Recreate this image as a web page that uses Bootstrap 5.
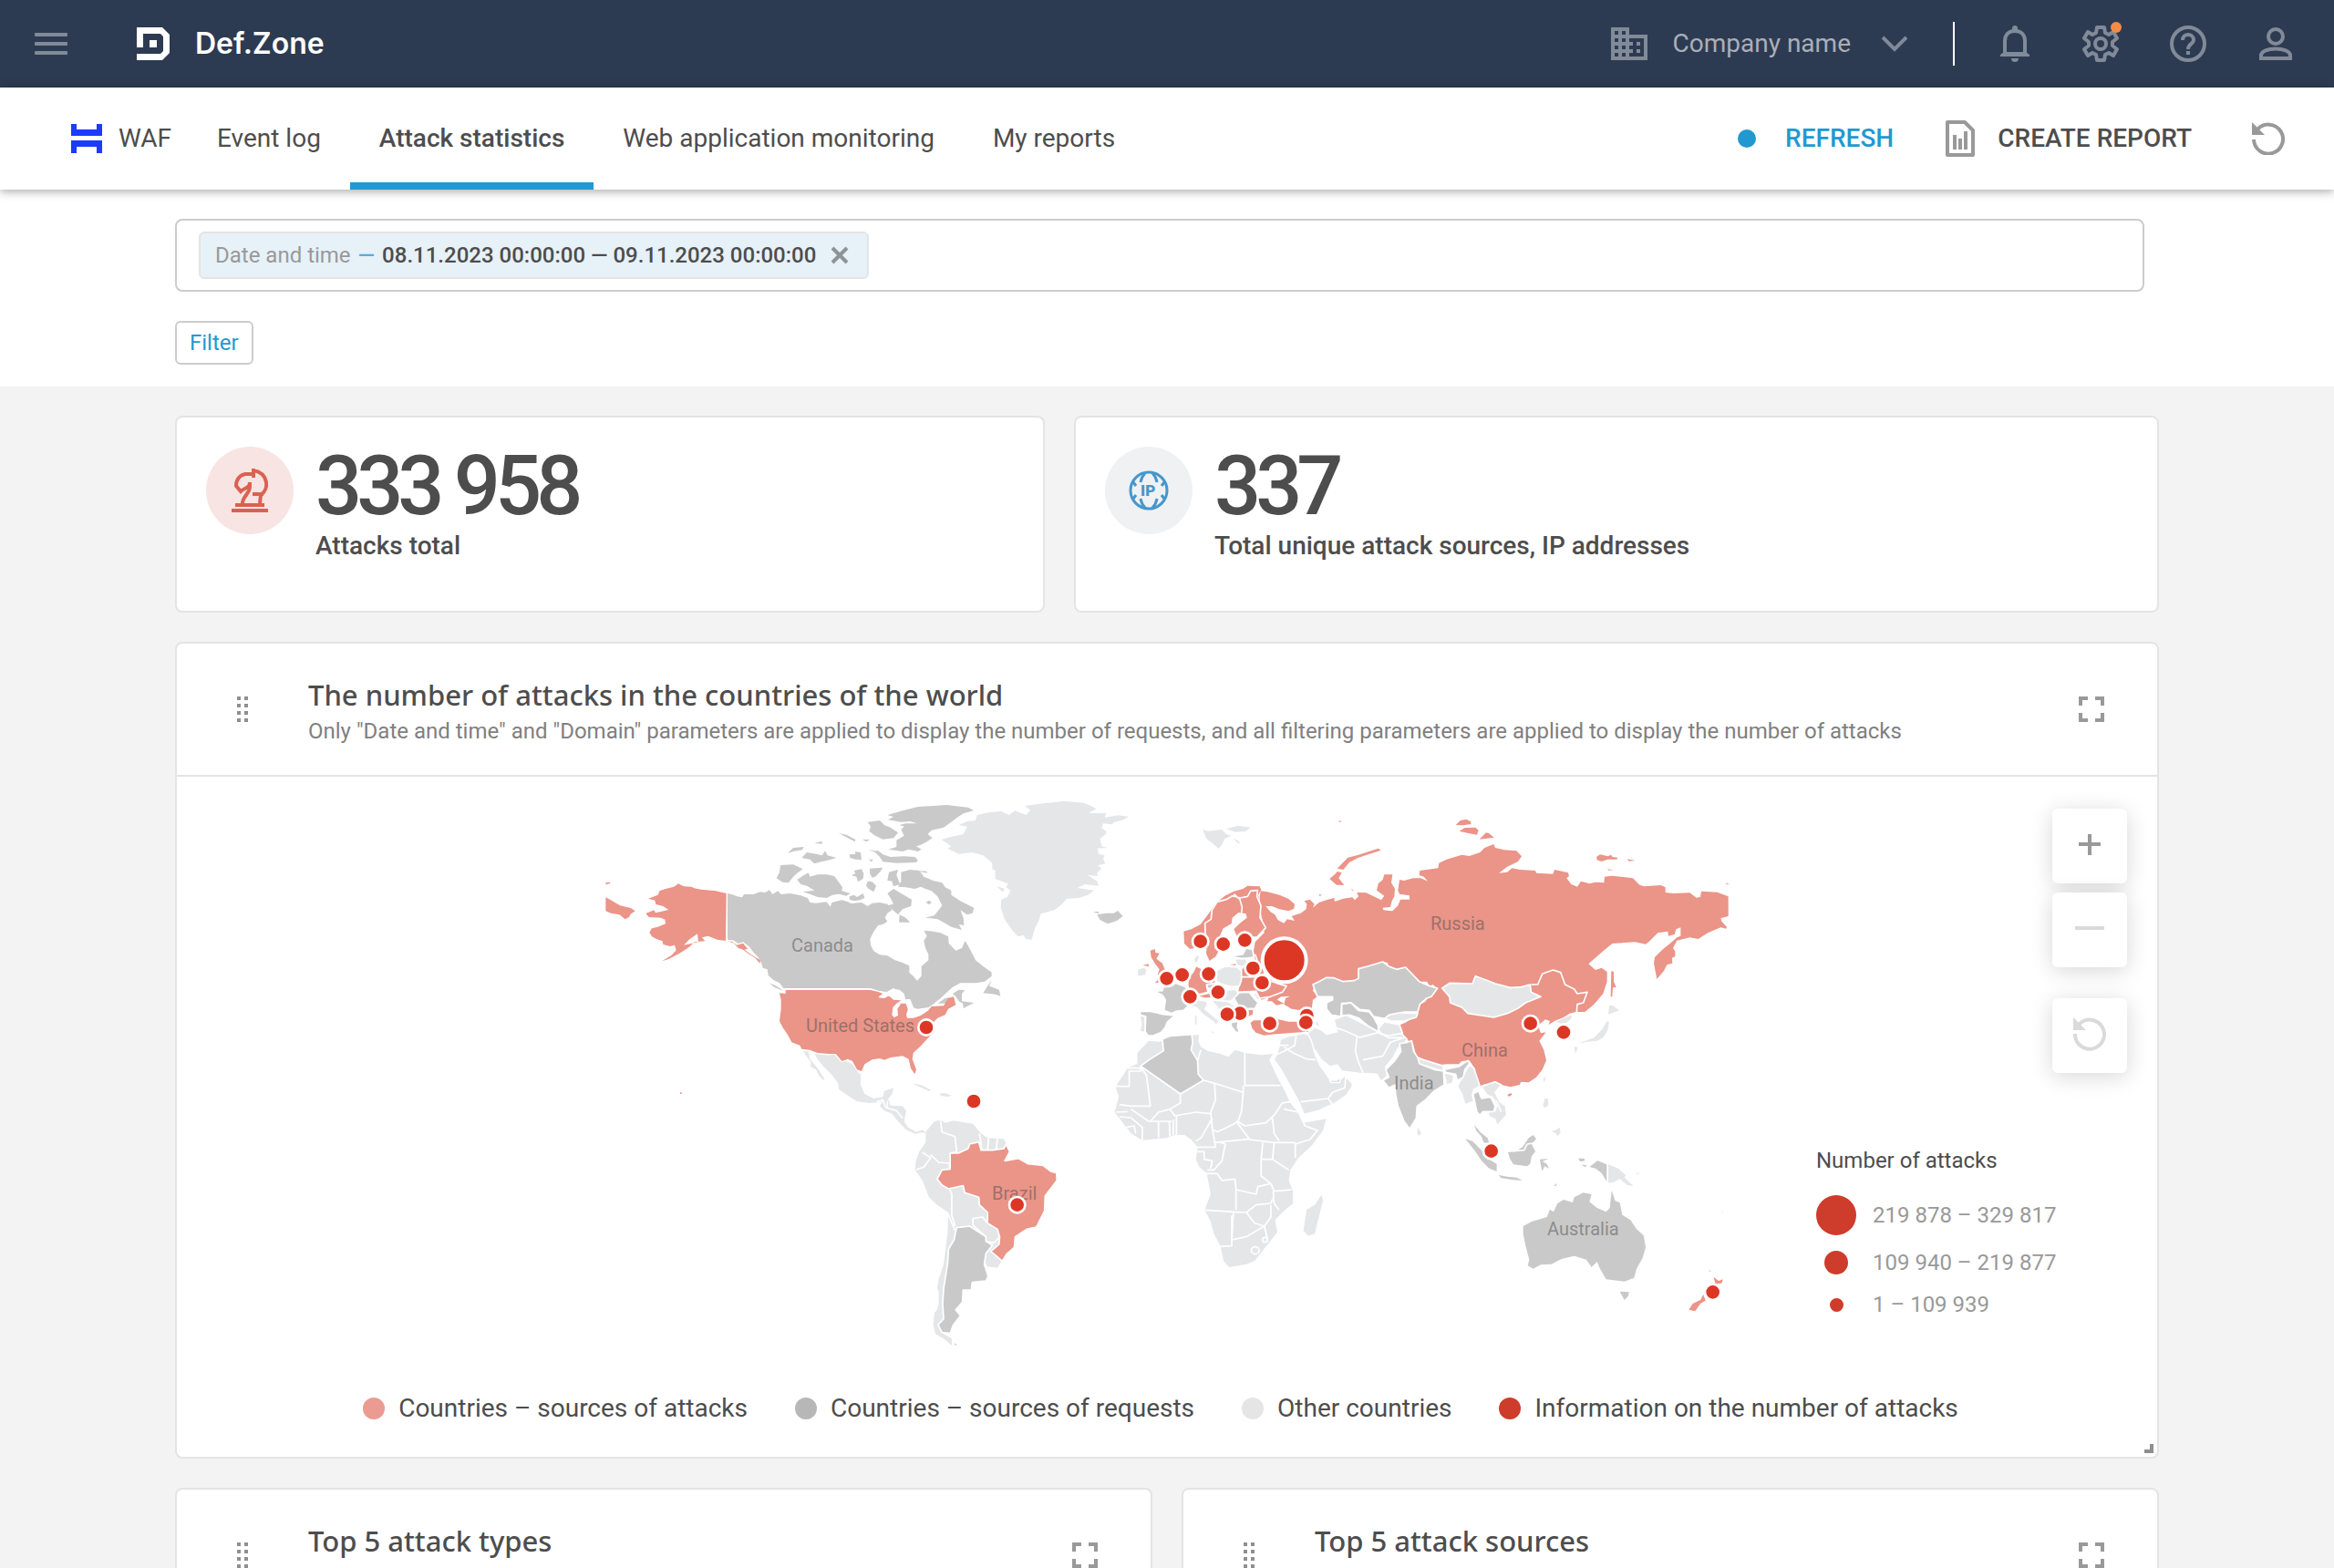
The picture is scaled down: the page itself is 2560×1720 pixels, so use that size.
<!DOCTYPE html>
<html lang="en">
<head>
<meta charset="utf-8">
<meta name="viewport" content="width=device-width, initial-scale=1">
<title>Def.Zone – Attack statistics</title>
<link rel="stylesheet" href="https://cdn.jsdelivr.net/npm/bootstrap@5.3.0/dist/css/bootstrap.min.css">
<style>
  :root { --ink:#4d4d4d; --muted:#999; --line:#e4e4e4; --accent:#2199d0; --danger-dot:#ce3c2b; }
  body { font-family: Roboto, "Liberation Sans", sans-serif; font-size: 28px; line-height: 40px; color: var(--ink); background: #f3f3f3; }
  svg { display: block; flex: none; }
  button { font: inherit; color: inherit; }
  .plain { border: 0; background: none; padding: 0; }
  .topbar { height: 96px; background: #2d3b52; padding: 0 44px 0 38px; color: #818a98; }
  .brand { font-family: Inter, sans-serif; font-weight: 600; font-size: 32px; color: #fff; margin-left: 76px; gap: 28px; }
  .company { gap: 28px; color: #a9afb9; }
  .company .chev { margin-left: 6px; }
  .rule-v { width: 2px; height: 48px; background: #fff; margin: 0 48px 0 50px; }
  .topicons { gap: 56px; }
  .alert-dot { position: absolute; top: -4px; right: -3px; width: 12px; height: 12px; border-radius: 50%; background: #f58b45; }
  .subbar { height: 112px; background: #fff; padding: 0 54px 0 78px; box-shadow: 0 2px 10px rgba(0,0,0,.35); position: relative; z-index: 2; }
  .product { gap: 18px; margin-right: 18px; }
  .tabs a { color: var(--ink); text-decoration: none; padding: 0 32px; height: 112px; display: flex; align-items: center; border-top: 8px solid transparent; border-bottom: 8px solid transparent; }
  .tabs a.active { font-weight: 500; border-bottom-color: var(--accent); }
  .refresh { color: var(--accent); font-weight: 500; gap: 32px; }
  .refresh::before { content: ""; width: 20px; height: 20px; border-radius: 50%; background: var(--accent); }
  .report { font-weight: 500; gap: 24px; margin: 0 66px 0 56px; }
  .filters { background: #fff; padding: 32px 208px 24px 192px; font-size: 24px; line-height: 32px; }
  .searchbox { height: 80px; border: 2px solid #ccc; border-radius: 8px; padding: 0 24px; }
  .searchbox input { border: 0; outline: 0; background: none; min-width: 0; }
  .chip { height: 52px; border: 2px solid var(--line); border-radius: 6px; background: #e7f1f8; padding: 0 20px 0 16px; gap: 8px; color: var(--muted); }
  .chip b { font-weight: 500; color: var(--ink); }
  .chip .dash { color: #5aabd9; font-weight: 500; }
  .btn-filter { height: 48px; border: 2px solid #ccc; border-radius: 6px; background: #fff; color: var(--accent); padding: 0 14px; margin-top: 32px; }
  .board { padding: 32px 192px 0; gap: 32px; min-height: 0; }
  .panel { background: #fff; border: 2px solid var(--line); border-radius: 8px; }
  .stats { display: grid; grid-template-columns: 954fr 1190fr; gap: 32px; }
  .stat { height: 216px; padding: 32px; gap: 24px; line-height: 32px; font-weight: 500; }
  .stat .bubble { width: 96px; height: 96px; border-radius: 50%; flex: none; }
  .stat .total { font-size: 90px; line-height: 80px; letter-spacing: -6px; margin: 4px 0 9px; }
  .panel-top { height: 144px; padding: 36px 58px 0 66px; gap: 66px; }
  .panel-top h2 { font-family: "Noto Sans", sans-serif; font-weight: 500; font-size: 31px; line-height: 40px; margin: 0 0 4px; }
  .panel-top p { font-size: 24px; line-height: 32px; color: #808080; margin: 0; }
  .panel-top .tool { margin-top: 22px; }
  .mapgrid { border-top: 2px solid var(--line); padding-top: 8px; display: grid; grid-template-columns: 1fr minmax(0,1280px) 1fr; }
  .mapgrid .world { grid-column: 2; width: 100%; height: auto; }
  .side { padding: 27px 33px 0 72px; }
  .zoombtn { width: 82px; height: 82px; border: 0; border-radius: 6px; background: #fff; color: #999; box-shadow: 0 4px 24px rgba(0,0,0,.16); margin-bottom: 10px; }
  .zoombtn:disabled { color: #dadada; }
  .zoombtn.reset { margin: 24px 0 80px; }
  .scale { font-size: 24px; line-height: 32px; }
  .scale ul { color: var(--muted); margin: 22px 0 0; display: flex; flex-direction: column; gap: 14px; }
  .scale li { gap: 18px; }
  .scale .cell { width: 44px; display: flex; justify-content: center; }
  .dot { border-radius: 50%; background: var(--danger-dot); display: block; }
  .legend { gap: 38px; padding: 25px 0 33px; }
  .legend span { display: flex; align-items: center; gap: 15px; padding-right: 14px; }
  .legend i { width: 24px; height: 24px; border-radius: 50%; }
  .grip-corner { position: absolute; right: 4px; bottom: 4px; width: 10px; height: 10px; border: solid #8f8f8f; border-width: 0 4px 4px 0; }
  .pair { display: grid; grid-template-columns: 1fr 1fr; gap: 32px; }
  .pair .panel { height: 640px; }
  .atk { fill: #eb9488; } .req { fill: #c9c9c9; } .oth { fill: #e5e6e8; }
  .bd { fill: none; stroke: #fff; stroke-width: 5; stroke-linejoin: round; }
  .st path { stroke: #fff; stroke-width: 5; stroke-linejoin: round; }
  .pins circle { fill: #dc3725; stroke: #fff; stroke-width: 8; }
  .names { font-size: 20px; fill: #4d4d4d; fill-opacity: .5; }
</style>
<script src="https://cdn.jsdelivr.net/npm/bootstrap@5.3.0/dist/js/bootstrap.bundle.min.js"></script>
</head>
<body class="vh-100 d-flex flex-column overflow-hidden">

<header class="topbar d-flex align-items-center flex-shrink-0">
  <button class="plain" aria-label="Menu"><svg width="36" height="24" fill="currentColor"><rect width="36" height="4" rx="1"/><rect y="10" width="36" height="4" rx="1"/><rect y="20" width="36" height="4" rx="1"/></svg></button>
  <a class="brand d-flex align-items-center text-decoration-none" href="#">
    <svg width="36" height="36" fill="#fff"><path d="M0 0H28L36 8V28L28 36H0V29H26L29 26V10L26 7H7V22H0Z"/><path d="M14 14H22V22H14Z"/></svg>
    <span>Def.Zone</span>
  </a>
  <button class="plain company d-flex align-items-center ms-auto">
    <svg width="40" height="36" fill="#818a98" fill-rule="evenodd"><path d="M0 0H20V8H40V36H0ZM4 4V8H8V4ZM12 4V8H16V4ZM4 12V16H8V12ZM12 12V16H16V12ZM4 20V24H8V20ZM12 20V24H16V20ZM4 28V32H8V28ZM12 28V32H16V28ZM20 12V16H24V20H20V24H24V28H20V32H36V12ZM28 16H32V20H28ZM28 24H32V28H28Z"/></svg>
    <span>Company name</span>
    <svg class="chev" width="28" height="18" fill="none" stroke="#818a98" stroke-width="4"><path d="M1 2L14 15L27 2"/></svg>
  </button>
  <div class="rule-v"></div>
  <div class="topicons d-flex align-items-center">
    <button class="plain" aria-label="Notifications"><svg width="36" height="40" viewBox="0 0 36 40"><path fill="none" stroke="currentColor" stroke-width="4" d="M7 32V17C7 10 11 6 18 6S29 10 29 17V32"/><path fill="currentColor" d="M15 6V3A3 3 0 0 1 21 3V6ZM2 34V32L6 29H30L34 32V34ZM14 36H22A4 4 0 0 1 14 36Z"/></svg></button>
    <button class="plain position-relative" aria-label="Settings"><svg width="40" height="40" viewBox="0 0 40 40" fill="none" stroke="currentColor" stroke-width="4" stroke-linejoin="round"><circle cx="20" cy="20" r="6"/><path d="M16 2H24L25 8L29 10L34 7L38 14L33 18V22L38 26L34 33L29 30L25 32L24 38H16L15 32L11 30L6 33L2 26L7 22V18L2 14L6 7L11 10L15 8Z"/></svg><span class="alert-dot"></span></button>
    <button class="plain" aria-label="Help"><svg width="40" height="40" viewBox="0 0 40 40" fill="none" stroke="currentColor" stroke-width="4"><circle cx="20" cy="20" r="18"/><path d="M14 16C14 8 26 8 26 16C26 20 20 20 20 26"/><path d="M20 28V32"/></svg></button>
    <button class="plain" aria-label="Account"><svg width="40" height="36" viewBox="0 0 40 36" fill="none" stroke="currentColor" stroke-width="4"><circle cx="20" cy="10" r="8"/><path d="M4 34V31C4 21 36 21 36 31V34Z"/></svg></button>
  </div>
</header>

<nav class="subbar d-flex align-items-center flex-shrink-0">
  <a class="product d-flex align-items-center text-reset text-decoration-none" href="#">
    <svg width="34" height="32" fill="#1a3cff"><path d="M0 0H6V6H28V0H34V13H0ZM0 18H34V32H28V25H6V32H0Z"/></svg>WAF
  </a>
  <div class="tabs d-flex">
    <a href="#">Event log</a>
    <a href="#" class="active" aria-current="page">Attack statistics</a>
    <a href="#">Web application monitoring</a>
    <a href="#">My reports</a>
  </div>
  <button class="plain refresh d-flex align-items-center ms-auto">REFRESH</button>
  <button class="plain report d-flex align-items-center">
    <svg width="34" height="40" viewBox="0 0 34 40" fill="none" stroke="#999" stroke-width="4" stroke-linejoin="round"><path d="M3 2H22L31 11V38H3Z"/><path d="M11 16V32M17 20V32M23 12V32" stroke-width="4"/></svg>
    CREATE REPORT
  </button>
  <button class="plain" aria-label="Reset"><svg width="36" height="36" viewBox="0 0 36 36"><path fill="none" stroke="#999" stroke-width="4" d="M6 8A16 16 0 1 1 2 19"/><path fill="#999" d="M0 0V14H14Z"/></svg></button>
</nav>

<section class="filters flex-shrink-0">
  <div class="searchbox d-flex align-items-center">
    <div class="chip d-flex align-items-center flex-shrink-0"><span>Date and time</span><span class="dash">—</span><b>08.11.2023 00:00:00 — 09.11.2023 00:00:00</b>
      <button class="plain ms-2" aria-label="Remove"><svg width="20" height="20" stroke="#8d9498" stroke-width="4"><path d="M2 2L18 18M18 2L2 18"/></svg></button>
    </div>
    <input class="flex-grow-1" type="text" aria-label="Filter query">
  </div>
  <button class="btn-filter d-block">Filter</button>
</section>

<main class="board d-flex flex-column flex-grow-1">
  <div class="stats">
    <section class="panel stat d-flex">
      <div class="bubble d-flex align-items-center justify-content-center" style="background:#f8e4e2">
        <svg width="40" height="48" viewBox="0 0 40 48" fill="none" stroke="#db6152" stroke-width="4"><path d="M0 46H40M4 40H36"/><path d="M12 38C12 31 20 27 20 20V15C20 22 14 21 10 25L5 19C5 12 9 7 15 6H24"/><path d="M24 0V10M24 2C40 5 42 22 32 29L31 38M23 28H35"/></svg>
      </div>
      <div><div class="total">333 958</div>Attacks total</div>
    </section>
    <section class="panel stat d-flex">
      <div class="bubble d-flex align-items-center justify-content-center" style="background:#eff1f3">
        <svg width="44" height="44" viewBox="0 0 44 44" fill="none" stroke="#4796cc" stroke-width="3"><circle cx="22" cy="22" r="20"/><path d="M18 3Q14 7 13 13M26 3Q30 7 31 13M18 41Q14 37 13 31M26 41Q30 37 31 31M5 13L8 17M5 31L8 27M39 13L36 17M39 31L36 27"/><text x="13" y="28" font-size="17" font-weight="900" fill="#4796cc" stroke="none">IP</text></svg>
      </div>
      <div><div class="total">337</div>Total unique attack sources, IP addresses</div>
    </section>
  </div>

  <section class="panel position-relative">
    <div class="panel-top d-flex">
      <svg class="tool" width="12" height="28" fill="#8f8f8f"><path id="grip" d="M0 0h4v4H0zM8 0h4v4H8zM0 8h4v4H0zM8 8h4v4H8zM0 16h4v4H0zM8 16h4v4H8zM0 24h4v4H0zM8 24h4v4H8z"/></svg>
      <div class="flex-grow-1"><h2>The number of attacks in the countries of the world</h2>
      <p>Only "Date and time" and "Domain" parameters are applied to display the number of requests, and all filtering parameters are applied to display the number of attacks</p></div>
      <button class="plain tool align-self-start" aria-label="Full screen"><svg width="28" height="28" fill="#999"><path id="full" d="M0 0H10V4H4V10H0ZM18 0H28V10H24V4H18ZM0 18H4V24H10V28H0ZM24 18H28V28H18V24H24Z"/></svg></button>
    </div>

    <div class="mapgrid">
      <svg class="world" viewBox="0 0 1280 640" role="img" aria-label="World map of attacks">
        <g transform="scale(.333333)">
          <!-- North America -->
          <g>
            <path class="atk" d="M470 360L435 352 387 347 365 343 355 338 330 337 312 328 298 338 270 345 250 352 245 365 213 377 235 383 238 396 262 402 280 414 258 419 237 424 232 415 205 426 215 438 255 440 268 446 270 460 245 470 225 475 217 488 225 502 240 510 260 517 262 528 285 534 300 530 305 547 290 563 258 583 280 576 315 558 335 545 350 535 365 520 400 517 390 505 410 500 440 512 468 516ZM330 530L350 510 375 493 378 520ZM73 373L95 385 120 400 155 408 170 418 155 428 150 438 137 445 118 430 90 425 73 418ZM73 325L87 323 87 328 73 330ZM472 516L490 520 505 530 525 524 540 542 530 545 550 560 582 580 580 590 565 572 545 560 525 545 510 540 495 524ZM318 1015h5v5h-5z"/>
            <path class="req" d="M474 360L490 364 505 370 522 373 528 363 560 363 580 355 598 357 612 349 622 363 640 352 650 363 680 360 715 367 738 376 745 390 765 392 800 388 812 404 817 390 850 382 870 388 880 393 915 390 935 402 950 392 975 390 1000 395 1015 415 1000 425 992 440 1000 452 985 462 970 465 955 485 943 510 945 530 955 550 975 562 1000 565 1025 580 1050 588 1072 598 1072 620 1085 632 1098 647 1112 632 1112 600 1135 580 1135 560 1125 540 1120 515 1130 500 1120 482 1150 485 1175 490 1200 502 1202 525 1225 548 1245 540 1256 516 1275 550 1290 580 1315 600 1343 620 1343 632 1320 650 1290 655 1240 655 1215 668 1200 682 1175 705 1150 725 1135 735 1100 740 1080 735 1070 718 1060 710 1055 690 1040 677 1020 675 1010 685 990 683 970 680 945 672 658 672 645 655 625 645 608 630 605 610 590 605 585 588 575 570 560 555 545 535 525 520 510 525 495 515 474 512Z"/>
            <path class="req" d="M703 315L720 303 740 292 745 305 770 298 800 298 825 303 838 320 852 340 850 352 878 360 865 368 840 362 820 365 800 375 770 372 745 362 722 355 760 350 735 335 715 330ZM648 267L690 265 722 280 705 292 690 305 675 325 655 323 635 310 645 290ZM672 228L690 210 725 207 720 217 690 222ZM718 243L735 225 765 230 785 235 795 220 803 235 832 243 810 250 785 255 760 262 745 248ZM760 195L785 188 785 197ZM840 162L865 167 895 183 893 190 870 178ZM918 182L942 183 930 190ZM875 232L895 230 893 222 912 225 915 250 895 248 877 243ZM935 215L955 220 970 220 985 232 1010 240 1055 238 1090 240 1100 250 1095 258 1030 260 985 256 975 240 960 225ZM938 248l15 0-5 8zM882 300L895 295 890 285 915 280 922 295 920 312 903 322 898 305ZM942 278L985 275 975 290 960 305 950 308 942 295ZM935 320L950 322 963 335 955 355 938 345 930 335ZM875 370L890 365 900 372 920 360 925 375 910 382 890 385 875 380Z"/>
            <path class="req" d="M1000 102L1050 88 1100 75 1195 69 1265 77 1285 87 1250 97 1230 110 1210 125 1185 143 1145 152 1133 165 1148 178 1130 190 1110 200 1095 205 1112 215 1100 222 1070 215 1050 222 1003 215 1030 207 1030 185 1055 170 1045 150 1055 140 1040 135 1060 130 1097 130 1075 123 1045 125 1002 118 1020 108ZM935 125L975 120 990 135 1010 143 1035 160 1020 178 985 182 960 170 940 155 945 140ZM1005 290L1035 282 1030 300 1042 330 1020 337 1015 320 1000 318ZM1045 290L1075 282 1105 285 1120 305 1150 318 1180 325 1190 340 1210 350 1210 365 1240 385 1285 408 1280 425 1262 430 1240 415 1250 440 1252 465 1235 462 1245 480 1210 470 1185 455 1165 445 1125 440 1155 432 1180 400 1165 370 1145 352 1125 345 1110 338 1090 345 1060 340 1035 338 1045 320ZM1092 285L1130 287 1130 293ZM1000 400L1020 395 1010 375 1000 360 1020 345 1045 360 1080 380 1078 402 1050 412 1035 430ZM1128 388l10-5 8 8-12 6zM1040 430L1060 440 1075 455 1055 455 1038 455ZM1315 688L1342 645 1335 665 1355 672 1368 678 1372 698 1355 692ZM1215 690L1235 677 1255 678 1245 690 1245 715 1285 720 1250 738 1248 722 1235 715 1225 700ZM610 655L630 662 650 675 655 680 630 670ZM1165 722L1190 705 1205 702 1195 722Z"/>
            <path class="atk" d="M665 678L945 678 970 684 985 690 970 703 990 705 1005 697 1020 710 1045 712 1030 722 1018 735 1015 760 1022 768 1035 762 1033 740 1045 722 1060 722 1068 740 1062 758 1065 770 1085 770 1110 762 1135 745 1145 732 1185 730 1200 705 1218 700 1225 727 1200 740 1190 760 1165 770 1150 785 1140 800 1150 820 1132 838 1110 862 1085 885 1082 905 1095 940 1090 955 1077 935 1070 905 1050 895 1010 900 990 908 975 903 950 907 925 922 915 945 900 940 885 912 870 905 850 912 830 888 810 888 770 885 745 875 718 872 712 860 685 850 672 825 655 800 645 780 650 740 650 710 645 688 665 690Z"/>
            <path fill="#fff" d="M970 700L1020 672 1050 690 1050 708 1010 698ZM1060 708L1075 708 1088 740 1105 742 1085 765 1065 770 1068 745Z"/>
            <path class="oth" d="M722 880L740 880 745 905 770 935 790 965 793 978 775 960 765 940 747 930 748 915ZM760 888L808 893 825 890 848 915 865 912 885 922 905 950 912 955 912 990 925 1020 955 1035 985 1030 990 1010 1020 1000 1015 1020 1000 1040 975 1047 940 1050 900 1045 870 1025 840 1005 838 985 815 955 790 930 770 905ZM985 1045L1005 1040 1010 1058 1050 1060 1062 1075 1055 1110 1068 1130 1095 1145 1115 1138 1130 1150 1112 1146 1092 1152 1062 1138 1035 1110 1015 1085 990 1075 975 1060ZM1080 985L1110 990 1145 1008 1135 1010 1110 998ZM1172 1018l20 0 20 8-15 3-22-3z"/>
            <path class="bd" d="M965 1045L985 1040 995 1065 1030 1075 1050 1100M1000 1045V1065"/>
          </g>
          <!-- Greenland, Iceland, Svalbard -->
          <g transform="translate(1080)">
            <path class="oth" d="M98 183L125 175 170 165 182 140 155 135 185 122 210 120 215 102 260 92 295 90 320 102 340 88 378 102 390 85 372 72 420 65 500 56 565 62 590 72 607 82 582 95 640 97 635 110 680 103 715 108 690 120 665 125 660 133 630 130 625 145 640 155 638 165 620 180 625 205 645 210 612 212 615 230 635 235 630 245 637 262 612 268 625 278 610 292 612 303 580 300 610 320 615 335 570 330 545 342 600 350 580 365 550 375 510 378 495 395 470 415 425 427 418 450 405 475 395 512 375 510 368 497 350 502 330 480 305 445 293 405 295 380 315 372 325 350 310 340 318 328 290 318 275 312 275 285 265 280 265 260 235 235 200 225 155 230 118 212 130 205ZM280 337l25 7-5 12zM957 150L975 155 1020 150 1035 165 1052 170 1030 180 1020 200 1010 213 990 195 970 180ZM1035 148L1075 137 1115 143 1100 155 1065 158ZM1057 178l15 8 10 10-10-2z"/>
            <path class="req" d="M610 430L640 425 665 425 678 417 695 435 675 450 645 460 620 448ZM597 422l15-3 6 8z"/>
          </g>
          <!-- Russia, China and Asia -->
          <g transform="translate(2400 60)">
            <path class="atk" d="M-172 292L-150 295 -110 305 -80 318 -60 335 -62 350 -80 358 -110 352 -135 342 -155 342 -140 360 -125 370 -115 388 -95 398 -85 385 -60 390 -70 375 -40 365 -22 352 -20 335 -28 325 -10 320 5 335 0 347 20 330 45 322 70 315 72 327 100 317 130 313 138 322 150 310 145 297 175 298 200 310 225 322 235 308 210 290 215 268 230 255 235 238 262 238 258 265 270 285 268 310 260 325 255 345 230 347 232 355 262 358 280 340 288 320 318 320 318 307 285 302 280 290 285 255 300 258 330 250 355 250 378 260 365 245 350 240 352 225 412 217 415 200 440 188 490 173 515 177 550 165 565 150 595 138 600 150 630 157 670 160 687 178 675 195 640 212 612 233 640 230 655 217 680 222 732 225 735 233 790 236 795 222 840 232 843 243 835 250 850 270 870 278 882 260 910 268 930 263 958 265 960 245 985 242 1053 250 1075 272 1090 277 1145 273 1160 280 1160 297 1185 300 1240 298 1262 314 1275 312 1278 293 1330 296 1367 310 1367 375 1342 382 1345 392 1362 410 1360 416 1342 412 1300 430 1268 450 1240 445 1198 455 1190 470 1185 480 1192 490 1192 508 1182 512 1183 530 1165 535 1155 555 1132 582 1122 530 1125 510 1150 485 1175 465 1198 445 1210 440 1210 412 1195 418 1190 435 1170 440 1168 425 1135 430 1105 460 1095 467 1060 460 985 465 955 490 907 532 930 552 950 545 968 558 968 590 955 630 925 665 895 690 865 690 845 695 825 708 800 718 775 732 780 720 765 715 740 735 750 760 767 757 745 785 760 815 768 850 755 880 735 905 710 922 685 920 680 930 650 937 620 930 600 918 560 930 548 935 540 920 530 895 535 880 515 850 490 852 480 862 440 862 415 865 390 855 370 848 340 835 335 815 330 795 300 775 292 755 280 735 305 725 325 712 345 700 352 665 372 655 375 640 390 640 410 615 395 600 385 605 375 590 350 590 305 543 275 550 250 540 245 528 230 525 205 535 180 540 150 548 150 580 135 587 100 590 70 578 45 577 20 595 5 600 0 620 15 640 0 650 -5 690 -20 700 -40 685 -70 680 -95 665 -90 645 -75 638 -105 640 -118 650 -95 662 -120 668 -135 655 -150 655 -145 642 -170 650 -185 620 -245 625 -240 595 -235 580 -235 555 -225 540 -200 530 -190 515 -195 490 -190 460 -160 430 -165 390 -175 350 -175 310Z"/>
            <path class="atk" d="M55 252L75 235 80 228 95 232 85 250 103 273 78 272ZM80 218L115 182 150 173 215 152 224 158 150 182 120 198 100 222ZM470 75L485 60 505 56 520 64 520 72 495 76ZM482 95L500 84 535 83 545 92 540 107 515 103ZM548 122L570 100 580 103 596 116ZM933 180L945 172 970 178 982 173 985 180 1003 182 1000 188 970 188 950 195 935 190ZM1035 187l25 5-20 2zM968 220l22 3-15 1zM982 555L990 558 990 590 998 608 987 610 985 640 980 640ZM83 60l15 4-10 1zM20 303l10 2-8 4zM125 285l10 5-5 1zM1360 267h7v3h-7zM640 963l12-6 3 6-10 6z"/>
            <g class="st">
              <path class="oth" d="M-20 755L5 740 30 750 45 763 80 755 75 740 70 715 110 700 130 710 160 725 215 755 255 750 285 740 290 760 310 780 300 795 280 810 265 840 240 870 245 900 225 920 210 895 150 892 95 885 80 865 55 870 25 845 10 820 -10 800Z"/>
              <path class="oth" d="M235 710L265 692 345 695 340 708 300 720 255 720ZM215 745L235 722 285 732 295 760 250 768 225 762ZM425 612L450 595 525 597 535 572 570 585 600 597 650 610 685 608 715 600 718 625 750 640 700 660 675 678 640 695 595 708 510 695 490 675 452 660 450 640Z"/>
              <path class="req" d="M0 600L20 590 45 577 70 578 100 590 135 587 150 580 150 548 180 540 230 525 250 540 275 550 305 543 350 590 385 605 410 612 390 640 375 645 352 665 345 690 300 690 250 700 235 712 200 705 185 685 155 682 125 660 95 662 92 705 60 700 45 680 45 660 65 650 65 640 40 640 15 640Z"/>
              <path class="req" d="M95 665L125 660 150 685 185 690 200 708 215 735 215 755 180 735 150 710 120 700 95 702Z"/>
              <path class="oth" d="M475 935L500 890 515 865 530 875 538 900 550 935 530 945 525 965 530 985 515 990 500 995 490 960ZM555 935L600 920 620 930 600 955 615 985 635 1000 638 1030 605 1065 600 1045 580 1035 575 1020 600 1015 605 1000 590 970 570 965ZM345 842L430 868 428 885 350 862ZM430 888L465 900 460 925 440 930Z"/>
              <path class="req" d="M285 795L310 790 325 785 332 820 345 840 350 860 400 880 430 885 432 930 400 950 370 980 343 1000 340 1040 318 1075 300 1050 280 1000 272 960 270 930 250 940 230 915 250 905 240 880 270 850 290 820ZM430 880L480 870 510 850 515 860 500 880 495 905 475 915 470 895 440 890ZM527 960L545 950 555 975 585 970 600 1000 595 1018 560 1018 550 1030 540 1020Z"/>
            </g>
            <path class="bd" d="M718 600L740 600 755 565 790 552 815 560 830 600 860 615 870 630 903 625 890 660 870 665 868 690M145 770L140 820 150 855 165 890M150 775L215 758 250 775 300 775M165 848L230 835 255 790 300 775M75 742L100 750 150 772M555 940L575 965 605 985 620 1020"/>
            <path class="oth" d="M975 670L985 668 1008 685 990 692 972 698ZM965 722L975 722 970 750 955 775 935 785 900 788 870 795 925 775 950 750 960 735ZM860 805l12 2-8 20zM800 722L850 700 852 710 835 725 815 728ZM757 912l10-12-5 22zM763 975l10 0 2 20-10 10-8-5zM345 1070l12 20-8 8-6-8z"/>
          </g>
          <!-- Europe and the Middle East -->
          <g transform="translate(1680 240)">
            <path class="atk" d="M295 245L320 238 350 222 378 185 398 155 430 128 460 113 490 105 505 95 545 97 550 108 540 125 547 160 550 205 565 233 540 262 500 262 470 260 460 238 478 220 503 200 500 187 475 183 455 200 452 220 425 235 412 265 420 285 407 315 400 328 380 342 370 320 365 290 350 290 330 300 315 303 297 285Z"/>
            <path class="bd" d="M368 310L365 218 385 205 388 175 405 148 435 140 455 128 480 135 505 130 515 112 540 110M460 122L480 140 487 165 485 190M538 108L536 130 549 160 546 200 565 233 535 265M485 395L540 395 600 415 633 425 620 445 580 460 545 465M530 320L540 350 560 370 560 395M470 445L535 442"/>
            <path class="atk" d="M185 308L200 303 202 315 215 318 205 335 225 350 232 370 250 385 262 400 250 415 225 412 200 415 215 400 210 385 215 370 200 350 188 330ZM160 357l18-5 3 8zM447 355l20-3 2 5z"/>
            <g class="st" stroke-width="4">
              <path class="atk" d="M310 395L325 380 335 358 350 365 370 372 400 380 400 420 370 425 375 445 350 452 330 450 312 440 308 420ZM270 410L285 390 308 385 305 410 290 415ZM335 458L400 442 428 440 432 455 405 465 365 465ZM485 505L525 500 525 520 500 530 485 525ZM512 545L525 535 555 535 600 530 640 540 680 540 700 548 720 565 705 578 670 580 640 582 600 585 560 590 530 580 518 565Z"/>
              <path class="req" d="M198 442L225 440 228 428 255 425 268 415 295 425 310 435 305 460 310 490 295 505 270 508 255 515 230 505 235 470 225 455ZM152 508L185 508 228 518 265 522 240 545 235 560 220 578 195 588 178 588 168 575 170 525 152 520ZM370 420L400 415 420 428 400 440 375 432ZM458 325L490 320 500 300 522 305 525 330 490 335 462 330ZM458 460L475 447 510 445 530 470 540 480 530 498 495 500 475 490Z"/>
              <path class="oth" d="M141 370L165 362 175 372 170 390 143 395ZM150 522L168 525 168 578 150 575 155 550ZM328 335L340 318 348 330 340 348 330 350ZM400 375L430 360 470 362 485 375 485 405 478 425 450 427 420 418 402 410ZM425 440L465 435 475 450 450 475 425 475 410 460ZM520 445l15 5 12 20-12-2zM315 480L345 470 372 475 372 490 365 500 400 530 412 540 400 555 395 545 360 520 335 495 315 492ZM370 573l27 0-2 10zM330 520l10-2 0 35-10 3zM462 335L500 335 505 350 490 362 470 358ZM385 470L440 475 470 495 480 520 485 540 455 545 440 530 410 500Z"/>
              <path class="req" d="M452 545L475 540 472 560 480 580 465 575 450 555Z"/>
              <path class="oth" d="M600 650L610 620 612 600 640 590 690 580 705 585 715 605 728 650 745 688 765 715 780 738 815 728 825 720 850 745 850 755 830 785 790 812 740 835 690 848 680 820 665 790 640 745 615 700 592 668ZM723 535L740 545 745 560 730 555Z"/>
              <path class="req" d="M775 735L800 735 812 722 808 742 780 742Z"/>
            </g>
            <path class="bd" d="M680 806L770 795 785 775 825 760 828 725M770 795L785 815M625 625L655 645 700 665 730 668M600 650L625 640 660 620 665 588M612 620L640 620"/>
          </g>
          <!-- Africa and South America -->
          <g transform="translate(960 780) scale(1.071429 1)">
            <path class="oth" d="M805 105L840 65 875 68 900 52 970 47 995 45 992 65 1000 85 1020 98 1060 108 1085 118 1105 95 1135 105 1185 112 1222 108 1210 128 1235 185 1255 225 1275 270 1305 310 1315 335 1385 322 1375 360 1340 410 1300 450 1275 490 1270 525 1283 560 1283 600 1250 630 1228 655 1235 695 1205 735 1165 790 1140 800 1087 810 1070 790 1060 740 1040 700 1030 660 1012 622 1030 570 1018 500 995 480 985 455 990 415 970 390 950 375 920 375 895 385 820 392 785 370 750 320 735 300 740 280 748 250 738 215 760 180 775 155 805 140ZM1370 572L1375 590 1350 700 1330 707 1315 690 1325 620 1350 605Z"/>
            <path class="req st" d="M882 62L910 52 970 47 975 70 970 95 990 130 992 175 1008 195 937 240 815 148 845 125 885 98Z"/>
            <path class="bd" d="M882 62L885 98 845 125 815 148L937 240 1008 195 992 175 990 130 970 95 975 70 972 45M990 130L1000 95M775 155H815V165H780V215H738M815 150L833 180 845 280H785L750 275M937 240V270L905 290 870 300 845 330M1008 195L1042 205 1130 235M1135 105V212H1245M1130 212V235L1125 295 1112 340M1042 205L1045 260 1030 300 1035 350M905 290L920 312 985 300 1030 305M1035 355L1050 365 1100 340 1112 330 1135 345 1200 335 1225 310 1250 270 1275 265M1035 320L1000 385 985 395M925 312V375M1112 335L1150 390 1225 400 1290 400M1220 320L1225 370 1240 395M1255 290L1300 300 1320 345 1358 360 1335 390 1290 405V450M1300 300L1315 330M1040 400L1150 388M1035 350L1045 415H990M990 430H1010V455L1035 460 1030 485M1060 400L1075 405 1065 460 1040 490H1020M1018 502H1050L1065 525 1105 520 1108 555 1170 570 1175 545 1215 535M1190 400L1185 460V510L1215 535 1225 560 1280 555M1185 455H1220L1270 490M1225 400L1220 455M1012 622L1100 628 1140 630 1170 605 1215 600 1225 575M1108 555V620M1095 640V740L1060 742M1095 720L1140 710 1195 675 1205 720M1095 720L1100 630M1140 630L1165 665 1195 675 1215 645 1215 605M1222 560L1225 600 1240 622M750 315L785 318 820 350V392M785 290L840 330 845 330 910 330M770 350L795 345 800 370M870 330V385M903 330L905 380M915 325V375M740 300L775 298"/>
            <circle class="bd" cx="1167" cy="755" r="12"/><circle class="bd" cx="1197" cy="720" r="8"/>
            <path class="oth" d="M180 332L200 325 215 335 240 328 300 338 325 370 345 385 395 388 403 405 400 600 380 700 388 790 375 812 345 808 335 790 300 720 245 700 235 800 215 900 205 1000 210 1030 235 1045 235 1068 210 1045 185 1030 178 1000 182 960 190 950 195 930 195 890 190 880 195 850 210 800 222 700 225 630 190 605 165 580 145 525 122 490 125 460 135 430 155 400 155 365Z"/>
            <g class="st">
              <path class="atk" d="M230 435L255 435 285 420 290 405 318 398 325 425 360 425 395 420 402 405 413 430 398 460 440 452 470 470 515 475 540 495 557 500 558 525 522 575 520 625 495 678 465 685 430 710 427 745 405 765 390 790 355 758 380 735 382 710 375 685 345 665 345 630 320 605 318 580 275 565 270 542 225 552 205 540 190 520 205 490 230 487Z"/>
              <path class="req" d="M250 680L290 675 340 710 340 725 360 738 340 765 335 800 347 840 340 855 298 860 295 885 270 885 268 925 247 950 262 970 240 1000 230 1028 205 1025 193 1000 210 980 207 930 210 880 222 800 225 750 242 720ZM240 1055l22 15-20-2z"/>
            </g>
            <path class="bd" d="M200 325L205 365 245 380 250 430 230 435M125 490L150 480 170 450 145 432M170 440L195 465 228 468V490M228 552L235 570V640L245 675M300 672V650L330 645 345 665M300 672L340 710M340 725L365 730 382 710M320 370L328 425M348 385L345 425M375 388L372 420M222 630L245 690"/>
          </g>
          <!-- South-East Asia and Oceania -->
          <g transform="translate(2580 660)">
            <path class="req" d="M322 508L345 515 375 545 400 575 425 590 425 615 400 605 375 580 355 550ZM352 462L370 485 395 505 400 522 382 520 375 500 357 480ZM430 627L460 632 490 635 510 645 480 643 440 637ZM462 552L485 550 510 535 530 505 545 495 555 508 540 525 552 550 540 565 535 590 525 598 480 592 468 572ZM567 575L595 573 575 582 590 590 597 605 582 598 575 615 570 595ZM730 600L757 580 787 592 787 648 770 620 750 605ZM693 572l20 0 2 8-15 3zM705 592l15 3 0 5-10-2zM612 662l12-8-3 8z"/>
            <path class="bd" d="M480 548L515 545 525 525 545 522"/>
            <path class="oth" d="M792 592L825 605 850 628 845 635 875 663 855 660 830 640 808 652 792 652ZM880 622l18-4-8 6zM605 482l12-2 15-10 3 18-10 10-8-10zM1165 745l6 2-5 2z"/>
            <path class="req" d="M512 795L540 780 590 765 600 740 612 748 625 720 645 708 675 717 680 700 710 685 737 690 730 715 755 735 785 748 797 735 803 678 815 712 830 718 838 758 865 775 885 805 908 825 915 865 905 900 885 935 877 965 845 977 785 970 765 935 755 912 737 930 720 905 680 893 640 902 605 920 570 922 545 935 527 925 532 905 520 860 512 820ZM830 1010L860 1012 858 1025 845 1038Z"/>
            <path class="atk" d="M1138 962L1155 975 1170 970 1165 983 1145 985ZM1105 1020L1112 1040 1095 1050 1078 1075 1057 1070 1070 1050 1095 1038ZM1124 940l6 3-3 2z"/>
          </g>
        </g>
        <g class="names">
          <text x="228" y="184">Canada</text><text x="244" y="272">United States</text><text x="448" y="456">Brazil</text>
          <text x="929" y="160">Russia</text><text x="963" y="299">China</text><text x="889" y="335">India</text><text x="1057" y="495">Australia</text>
        </g>
        <g class="pins" transform="scale(.333333)">
          <circle cx="2030" cy="518" r="26"/><circle cx="2105" cy="527" r="26"/><circle cx="2176" cy="514" r="26"/><circle cx="2203" cy="606" r="26"/>
          <circle cx="2306" cy="580" r="72" style="stroke-width:12"/><circle cx="2233" cy="654" r="26"/><circle cx="1970" cy="628" r="26"/><circle cx="1919" cy="640" r="26"/>
          <circle cx="2057" cy="625" r="26"/><circle cx="2088" cy="685" r="26"/><circle cx="1996" cy="700" r="26"/><circle cx="2160" cy="755" r="26"/><circle cx="2118" cy="758" r="26"/>
          <circle cx="2258" cy="788" r="26"/><circle cx="2380" cy="762" r="26"/><circle cx="2377" cy="785" r="26"/><circle cx="1128" cy="801" r="26"/><circle cx="1284" cy="1044" r="26"/>
          <circle cx="3116" cy="788" r="26"/><circle cx="3225" cy="817" r="26"/><circle cx="2987" cy="1208" r="26"/><circle cx="3716" cy="1672" r="26"/><circle cx="1427" cy="1385" r="26"/>
        </g>
      </svg>
      <div class="side d-flex flex-column">
        <div class="d-flex flex-column align-items-end">
          <button class="zoombtn d-flex align-items-center justify-content-center" aria-label="Zoom in"><svg width="24" height="26" viewBox="0 0 24 26" stroke="currentColor" stroke-width="4"><path d="M0 11H24M12 -1V23"/></svg></button>
          <button class="zoombtn d-flex align-items-center justify-content-center" aria-label="Zoom out" disabled><svg width="32" height="12" stroke="currentColor" stroke-width="4"><path d="M0 4H32"/></svg></button>
          <button class="zoombtn reset d-flex align-items-center justify-content-center" aria-label="Reset zoom" disabled><svg width="36" height="40" viewBox="0 0 36 40"><path fill="none" stroke="currentColor" stroke-width="4" d="M6 8A16 16 0 1 1 2 18"/><path fill="currentColor" d="M0 0V14H14Z"/></svg></button>
        </div>
        <div class="scale">
          <div>Number of attacks</div>
          <ul class="list-unstyled">
            <li class="d-flex align-items-center"><span class="cell"><span class="dot" style="width:44px;height:44px"></span></span>219 878 – 329 817</li>
            <li class="d-flex align-items-center"><span class="cell"><span class="dot" style="width:26px;height:26px"></span></span>109 940 – 219 877</li>
            <li class="d-flex align-items-center"><span class="cell"><span class="dot" style="width:15px;height:15px"></span></span>1 – 109 939</li>
          </ul>
        </div>
      </div>
    </div>
    <div class="legend d-flex justify-content-center">
      <span><i style="background:#eb9b91"></i>Countries – sources of attacks</span>
      <span><i style="background:#b7b7b7"></i>Countries – sources of requests</span>
      <span><i style="background:#e5e5e5"></i>Other countries</span>
      <span><i style="background:#ce3c2b"></i>Information on the number of attacks</span>
    </div>
    <div class="grip-corner"></div>
  </section>

  <div class="pair">
    <section class="panel"><div class="panel-top d-flex">
      <svg class="tool" width="12" height="28" fill="#8f8f8f"><use href="#grip"/></svg>
      <h2 class="flex-grow-1">Top 5 attack types</h2>
      <button class="plain tool align-self-start" aria-label="Full screen"><svg width="28" height="28" fill="#999"><use href="#full"/></svg></button>
    </div></section>
    <section class="panel"><div class="panel-top d-flex">
      <svg class="tool" width="12" height="28" fill="#8f8f8f"><use href="#grip"/></svg>
      <h2 class="flex-grow-1">Top 5 attack sources</h2>
      <button class="plain tool align-self-start" aria-label="Full screen"><svg width="28" height="28" fill="#999"><use href="#full"/></svg></button>
    </div></section>
  </div>
</main>
</body>
</html>
